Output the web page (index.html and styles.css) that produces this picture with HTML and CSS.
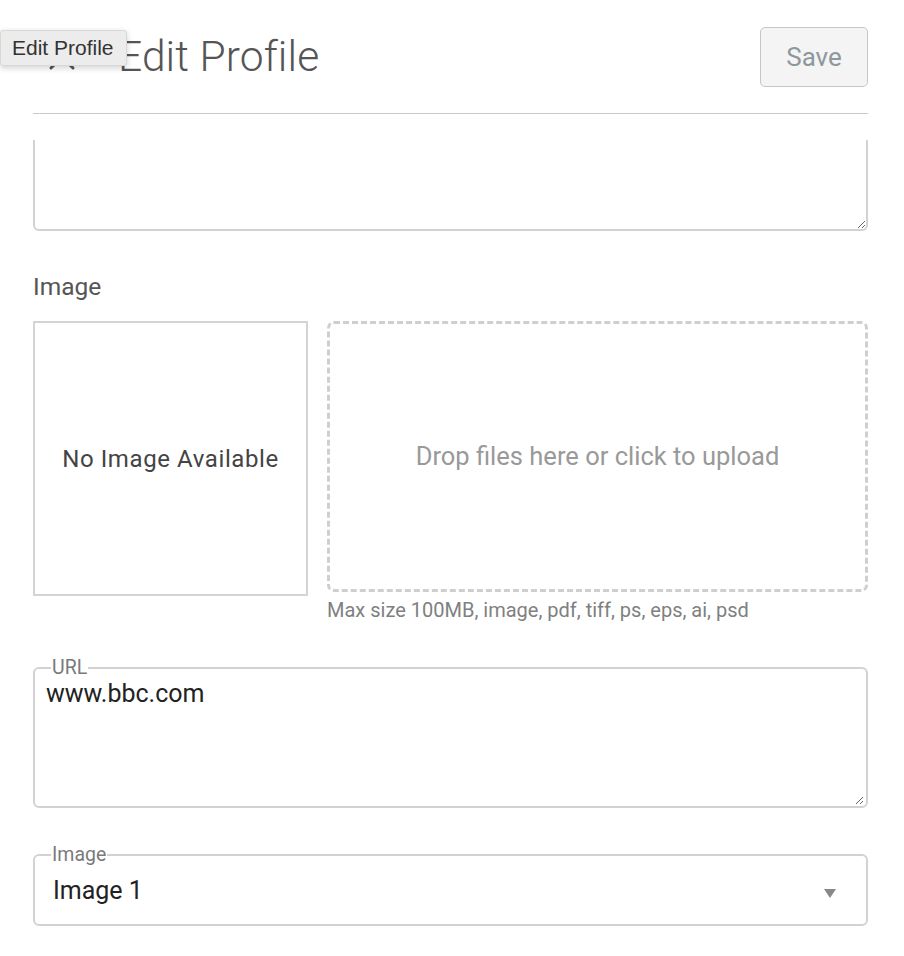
FILE: index.html
```html
<!DOCTYPE html>
<html>
<head>
<meta charset="utf-8">
<link rel="stylesheet" href="styles.css">
</head>
<body>
<div class="page">
  <header class="header">
    <button class="close" aria-label="Close">
      <svg width="28" height="28" viewBox="0 0 28 28"><path d="M3 3 L25 25 M25 3 L3 25" stroke="#555" stroke-width="3" fill="none" stroke-linecap="round"/></svg>
    </button>
    <h1 class="title">Edit Profile</h1>
    <button class="save">Save</button>
  </header>
  <div class="tooltip">Edit Profile</div>
  <main class="scroll">
    <div class="scroll-inner">
      <textarea class="bio"></textarea>

      <div class="image-field">
        <div class="label">Image</div>
        <div class="image-row">
          <div class="preview">No Image Available</div>
          <div class="drop-col">
            <div class="dropzone">Drop files here or click to upload</div>
            <div class="hint">Max size 100MB, image, pdf, tiff, ps, eps, ai, psd</div>
          </div>
        </div>
      </div>

      <fieldset class="outlined url">
        <legend>URL</legend>
        <textarea class="url-input">www.bbc.com</textarea>
      </fieldset>

      <fieldset class="outlined select">
        <legend>Image</legend>
        <div class="select-row">
          <span class="select-value">Image 1</span>
          <span class="caret"></span>
        </div>
      </fieldset>
    </div>
  </main>
</div>
</body>
</html>
```
FILE: styles.css
```css
* { box-sizing: border-box; }
html, body { margin: 0; padding: 0; background: #fff; }
body { font-family: Roboto, "Liberation Sans", Arial, sans-serif; color: #333; }

.page { position: relative; width: 904px; height: 956px; padding: 0 36px 0 33px; overflow: hidden; }

.header {
  display: flex; align-items: center;
  height: 114px;
  border-bottom: 1px solid #c9c9c9;
}
.close { border: 0; background: none; padding: 0; margin: 0 0 0 15px; width: 28px; height: 28px; display: flex; }
.title {
  margin: 0 0 0 42px;
  font-weight: 300; font-size: 42.5px; color: #555; letter-spacing: 0.1px;
  flex: 1; line-height: 50px;
}
.save {
  width: 108px; height: 60px;
  background: #f4f4f4; border: 1px solid #c6c6c6; border-radius: 5px;
  font-family: Roboto, sans-serif; font-size: 26px; color: #8d989d;
  margin-top: 1px;
}

.tooltip {
  position: absolute; left: 0; top: 30px;
  height: 36px; padding: 0 12px 0 11px;
  display: flex; align-items: center;
  background: #ececec; border: 1px solid #d8d8d8; border-radius: 3px;
  box-shadow: 0 2px 6px rgba(0,0,0,0.18);
  font-family: "Liberation Sans", Arial, sans-serif; font-size: 21px; color: #333;
}

.scroll { height: 816px; margin-top: 26px; overflow: hidden; }
.scroll-inner { margin-top: -30px; }

.bio {
  display: block; width: 100%; height: 121px;
  border: 2px solid #d2d2d2; border-radius: 6px; resize: vertical;
}

.image-field { margin-top: 41px; }
.label { font-size: 24.5px; line-height: 30px; color: #555; }
.image-row { display: flex; gap: 19px; margin-top: 19px; }
.preview {
  width: 275px; height: 275px; flex: none;
  border: 2px solid #d4d4d4;
  display: flex; align-items: center; justify-content: center;
  font-size: 24px; letter-spacing: 0.6px; color: #444;
}
.drop-col { flex: 1; }
.dropzone {
  height: 271px;
  border: 3px dashed #cfcfcf; border-radius: 7px;
  display: flex; align-items: center; justify-content: center;
  font-size: 25.5px; color: #999; padding-bottom: 2px;
}
.hint { margin-top: 6px; font-size: 20px; line-height: 24px; color: #808080; }

.outlined {
  margin: 0; min-width: 0;
  border: 2px solid #d2d2d2; border-radius: 6px;
}
.outlined legend {
  font-size: 19.5px; line-height: 22px; color: #7a7a7a;
  padding: 0 1px; margin-left: 5px;
}
.url { margin-top: 35px; padding: 0 2px 0 11px; height: 151px; }
.url-input {
  display: block; width: 100%; height: 126px;
  border: 0; outline: none; padding: 0; margin-top: 0;
  font-family: Roboto, sans-serif; font-size: 25px; line-height: 30px; color: #222;
  resize: vertical;
}

.select { margin-top: 36px; padding: 0 30px 0 11px; height: 82px; }
.select-row { display: flex; align-items: center; height: 58px; padding-left: 7px; padding-bottom: 10px; }
.select-value { flex: 1; font-size: 25px; color: #222; }
.caret {
  width: 0; height: 0;
  border-left: 6px solid transparent; border-right: 6px solid transparent;
  border-top: 9px solid #888;
  position: relative; top: 3px;
}
```
